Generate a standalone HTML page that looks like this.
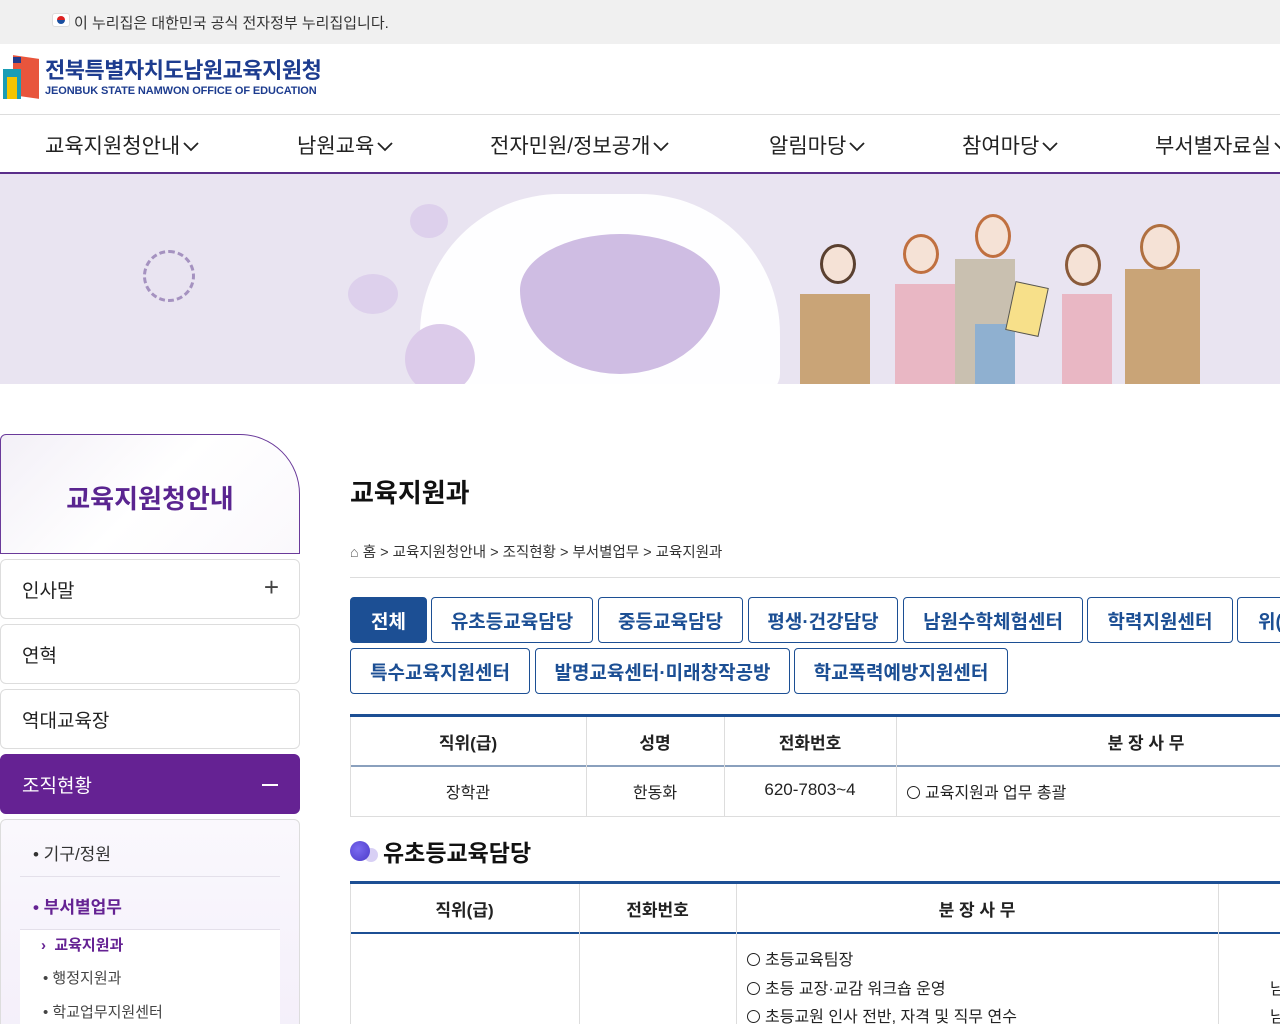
<!DOCTYPE html>
<html><head><meta charset="utf-8"><style>
*{box-sizing:border-box;margin:0;padding:0}
html,body{width:1280px;height:1024px;overflow:hidden}
body{position:relative;font-family:"Liberation Sans","Noto Sans CJK KR",sans-serif;background:#fff;color:#222}
.a{position:absolute}
.top{left:0;top:0;width:1280px;height:44px;background:#f0f0f0;font-size:15px;color:#333}
.nav span{position:absolute;top:134px;font-size:21px;color:#222;line-height:1.2;white-space:nowrap}
.nav svg{display:inline-block;vertical-align:middle;margin-left:3px}
.tab{position:absolute;height:46px;border:1px solid #1c4f94;border-radius:4px;color:#1c4f94;font-weight:bold;font-size:19px;display:flex;align-items:center;justify-content:center;background:#fff}
.side{position:absolute;left:0;width:300px;height:60px;border:1px solid #ddd;border-radius:6px;font-size:19px;padding-left:21px;display:flex;align-items:center}
.th{position:absolute;font-weight:bold;font-size:17px;text-align:center}
.vl{position:absolute;width:1px;background:#ddd}
.o{display:inline-block;width:13px;height:13px;border:1.6px solid #222;border-radius:50%;margin-right:5px;vertical-align:-1px}
</style></head><body>
<div class="a top"><div class="a" style="left:52px;top:13px;width:18px;height:14px;border-radius:3px;background:#fff;border:1px solid #ddd"><div class="a" style="left:4px;top:2px;width:8px;height:8px;border-radius:50%;background:linear-gradient(#d22 50%,#1a4fa0 50%)"></div></div><span class="a" style="left:74px;top:12px">이 누리집은 대한민국 공식 전자정부 누리집입니다.</span></div>
<!-- logo -->
<div class="a" style="left:3px;top:57px;width:36px;height:44px">
<div class="a" style="left:10px;top:0;width:26px;height:40px;background:#e8553c;transform:skewY(8deg)"></div>
<div class="a" style="left:0;top:12px;width:18px;height:30px;background:#1a9db5"></div>
<div class="a" style="left:4px;top:20px;width:10px;height:22px;background:#f5c400"></div>
<div class="a" style="left:10px;top:0;width:8px;height:6px;background:#233a8a"></div>
</div>
<div class="a" style="left:45px;top:59px;font-size:22px;line-height:24px;font-weight:bold;color:#1d3c8f;letter-spacing:-0.5px">전북특별자치도남원교육지원청</div>
<div class="a" style="left:45px;top:85px;font-size:11px;line-height:12px;font-weight:bold;color:#1d3c8f;letter-spacing:-0.1px">JEONBUK STATE NAMWON OFFICE OF EDUCATION</div>
<div class="a" style="left:0;top:114px;width:1280px;height:1px;background:#ddd"></div>
<div class="nav">
<span style="left:45px">교육지원청안내<svg width="16" height="10" viewBox="0 0 16 10"><path d="M1 1l7 7 7-7" fill="none" stroke="#222" stroke-width="1.8"/></svg></span>
<span style="left:297px">남원교육<svg width="16" height="10" viewBox="0 0 16 10"><path d="M1 1l7 7 7-7" fill="none" stroke="#222" stroke-width="1.8"/></svg></span>
<span style="left:490px">전자민원/정보공개<svg width="16" height="10" viewBox="0 0 16 10"><path d="M1 1l7 7 7-7" fill="none" stroke="#222" stroke-width="1.8"/></svg></span>
<span style="left:769px">알림마당<svg width="16" height="10" viewBox="0 0 16 10"><path d="M1 1l7 7 7-7" fill="none" stroke="#222" stroke-width="1.8"/></svg></span>
<span style="left:962px">참여마당<svg width="16" height="10" viewBox="0 0 16 10"><path d="M1 1l7 7 7-7" fill="none" stroke="#222" stroke-width="1.8"/></svg></span>
<span style="left:1155px">부서별자료실<svg width="16" height="10" viewBox="0 0 16 10"><path d="M1 1l7 7 7-7" fill="none" stroke="#222" stroke-width="1.8"/></svg></span></div>
<div class="a" style="left:0;top:172px;width:1280px;height:2px;background:#5a2e8a"></div>
<!-- banner -->
<div class="a" style="left:0;top:174px;width:1280px;height:210px;background:#e9e4f1;overflow:hidden">
<div class="a" style="left:143px;top:76px;width:52px;height:52px;border-radius:50%;border:3px dashed #a592c0"></div>
<div class="a" style="left:420px;top:20px;width:360px;height:200px;background:#fff;border-radius:140px 140px 20px 20px;opacity:.95"></div>
<div class="a" style="left:520px;top:60px;width:200px;height:140px;background:#cfbde3;border-radius:50% 50% 50% 50%/40% 40% 60% 60%"></div>
<div class="a" style="left:405px;top:150px;width:70px;height:70px;background:#dccbea;border-radius:50%"></div>
<div class="a" style="left:410px;top:30px;width:38px;height:34px;background:#ddd0ec;border-radius:50%"></div>
<div class="a" style="left:348px;top:100px;width:50px;height:40px;background:#ddd0ec;border-radius:50%"></div>
<div class="a" style="left:800px;top:120px;width:70px;height:90px;background:#c9a477"></div>
<div class="a" style="left:895px;top:110px;width:60px;height:100px;background:#e9b7c4"></div>
<div class="a" style="left:955px;top:85px;width:60px;height:125px;background:#c9c0b0"></div>
<div class="a" style="left:975px;top:150px;width:40px;height:60px;background:#8fb0d0"></div>
<div class="a" style="left:1062px;top:120px;width:50px;height:90px;background:#e9b7c4"></div>
<div class="a" style="left:1125px;top:95px;width:75px;height:115px;background:#c9a477"></div>
<div class="a" style="left:820px;top:70px;width:36px;height:40px;background:#f5e2d6;border-radius:50%;border:3px solid #5a4030"></div>
<div class="a" style="left:903px;top:60px;width:36px;height:40px;background:#f5e2d6;border-radius:50%;border:3px solid #c07040"></div>
<div class="a" style="left:975px;top:40px;width:36px;height:44px;background:#f5e2d6;border-radius:50%;border:3px solid #c07040"></div>
<div class="a" style="left:1065px;top:70px;width:36px;height:42px;background:#f5e2d6;border-radius:50%;border:3px solid #8a5a3a"></div>
<div class="a" style="left:1140px;top:50px;width:40px;height:46px;background:#f5e2d6;border-radius:50%;border:3px solid #b07040"></div>
<div class="a" style="left:1010px;top:110px;width:34px;height:50px;background:#f7e08a;border:1px solid #555;transform:rotate(12deg)"></div>
</div>
<!-- sidebar -->
<div class="a" style="left:0;top:434px;width:300px;height:120px;border:1px solid #6a3a9a;border-radius:6px 60px 0 0;background:linear-gradient(135deg,#f3f0f7,#fff 50%,#faf8fc)"></div>
<div class="a" style="left:0;top:479px;width:300px;text-align:center;font-size:26px;font-weight:bold;color:#5a2590">교육지원청안내</div>
<div class="side" style="top:559px">인사말<span class="a" style="right:20px;top:12px;font-size:26px;color:#444">+</span></div>
<div class="side" style="top:624px">연혁</div>
<div class="side" style="top:689px">역대교육장</div>
<div class="side" style="top:754px;background:#652293;border-color:#652293;color:#fff">조직현황<span class="a" style="right:21px;top:29px;width:16px;height:2px;background:#fff"></span></div>
<div class="a" style="left:0;top:819px;width:300px;height:220px;border:1px solid #ddd;border-radius:6px;background:linear-gradient(#faf8fd,#f4effa)"></div>
<div class="a" style="left:33px;top:840px;font-size:17px;color:#333">• 기구/정원</div>
<div class="a" style="left:20px;top:876px;width:260px;height:1px;background:#e4e0ea"></div>
<div class="a" style="left:33px;top:893px;font-size:17px;color:#652293;font-weight:bold">• 부서별업무</div>
<div class="a" style="left:20px;top:929px;width:260px;height:95px;background:#fff;border-top:1px solid #e4e0ea"></div>
<div class="a" style="left:41px;top:934px;font-size:15px;color:#652293;font-weight:bold">›&nbsp; 교육지원과</div>
<div class="a" style="left:43px;top:967px;font-size:15px;color:#444">• 행정지원과</div>
<div class="a" style="left:43px;top:1001px;font-size:15px;color:#444">• 학교업무지원센터</div>
<!-- content -->
<div class="a" style="left:350px;top:473px;font-size:26px;font-weight:bold;color:#111">교육지원과</div>
<div class="a" style="left:350px;top:541px;font-size:14.5px;color:#333"><span style="color:#666">⌂</span> 홈 &gt; 교육지원청안내 &gt; 조직현황 &gt; 부서별업무 &gt; 교육지원과</div>
<div class="a" style="left:350px;top:577px;width:930px;height:1px;background:#ddd"></div>
<div class="tab" style="left:350px;top:597px;width:77px;background:#1c4f94;color:#fff">전체</div>
<div class="tab" style="left:431px;top:597px;width:162px">유초등교육담당</div>
<div class="tab" style="left:598px;top:597px;width:145px">중등교육담당</div>
<div class="tab" style="left:748px;top:597px;width:150px">평생·건강담당</div>
<div class="tab" style="left:903px;top:597px;width:180px">남원수학체험센터</div>
<div class="tab" style="left:1087px;top:597px;width:146px">학력지원센터</div>
<div class="tab" style="left:1237px;top:597px;width:80px;justify-content:flex-start;padding-left:20px">위(</div>
<div class="tab" style="left:350px;top:648px;width:180px">특수교육지원센터</div>
<div class="tab" style="left:535px;top:648px;width:255px">발명교육센터·미래창작공방</div>
<div class="tab" style="left:794px;top:648px;width:214px">학교폭력예방지원센터</div>
<!-- table1 -->
<div class="a" style="left:350px;top:714px;width:930px;height:3px;background:#1c4f94"></div>
<div class="a" style="left:350px;top:717px;width:930px;height:50px;border-bottom:2px solid #8aa0bd"></div>
<div class="a" style="left:350px;top:816px;width:930px;height:1px;background:#ddd"></div>
<div class="vl" style="left:350px;top:717px;height:100px"></div>
<div class="vl" style="left:586px;top:717px;height:100px"></div>
<div class="vl" style="left:724px;top:717px;height:100px"></div>
<div class="vl" style="left:896px;top:717px;height:100px"></div>
<div class="th" style="left:350px;top:729px;width:236px">직위(급)</div>
<div class="th" style="left:586px;top:729px;width:138px">성명</div>
<div class="th" style="left:724px;top:729px;width:172px">전화번호</div>
<div class="th" style="left:896px;top:729px;width:500px">분 장 사 무</div>
<div class="a" style="left:350px;top:779px;width:236px;text-align:center;font-size:16px">장학관</div>
<div class="a" style="left:586px;top:779px;width:138px;text-align:center;font-size:16px">한동화</div>
<div class="a" style="left:724px;top:780px;width:172px;text-align:center;font-size:17px">620-7803~4</div>
<div class="a" style="left:907px;top:779px;font-size:16px"><span class="o"></span>교육지원과 업무 총괄</div>
<!-- section2 -->
<div class="a" style="left:364px;top:848px;width:14px;height:14px;border-radius:50%;background:#d8d0f5"></div>
<div class="a" style="left:350px;top:841px;width:20px;height:20px;border-radius:50%;background:radial-gradient(circle at 40% 40%,#7a6af0,#4b3ac8)"></div>
<div class="a" style="left:383px;top:834px;font-size:23px;font-weight:bold;color:#111">유초등교육담당</div>
<div class="a" style="left:350px;top:881px;width:930px;height:3px;background:#1c4f94"></div>
<div class="a" style="left:350px;top:884px;width:930px;height:50px;border-bottom:2px solid #1c4f94"></div>
<div class="vl" style="left:350px;top:884px;height:140px"></div>
<div class="vl" style="left:579px;top:884px;height:140px"></div>
<div class="vl" style="left:736px;top:884px;height:140px"></div>
<div class="vl" style="left:1218px;top:884px;height:140px"></div>
<div class="th" style="left:350px;top:896px;width:229px">직위(급)</div>
<div class="th" style="left:579px;top:896px;width:157px">전화번호</div>
<div class="th" style="left:736px;top:896px;width:482px">분 장 사 무</div>
<div class="a" style="left:747px;top:947px;font-size:16px;line-height:28.5px"><span class="o"></span>초등교육팀장<br><span class="o"></span>초등 교장·교감 워크숍 운영<br><span class="o"></span>초등교원 인사 전반, 자격 및 직무 연수</div>
<div class="a" style="left:1270px;top:976px;font-size:16px;line-height:28px">남<br>남</div>
</body></html>
